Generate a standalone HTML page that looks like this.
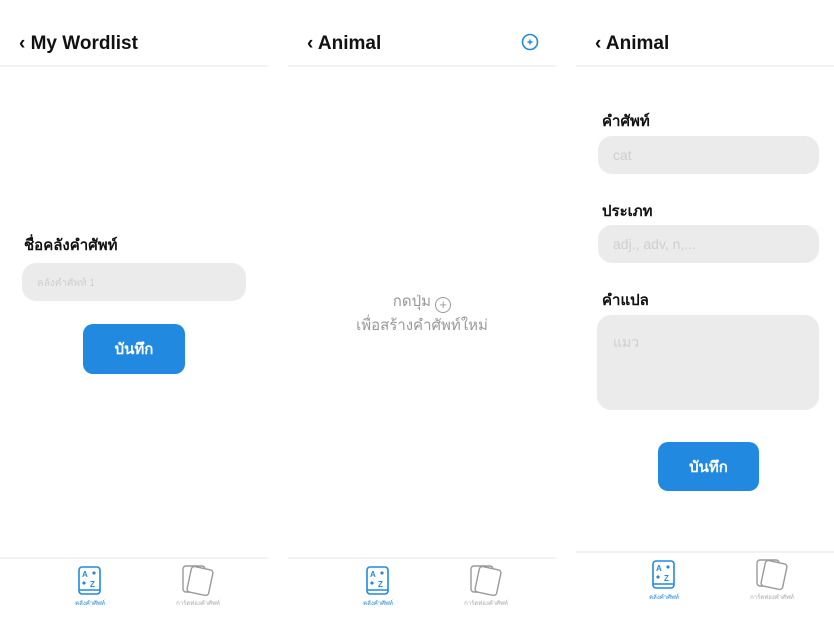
<!DOCTYPE html>
<html><head><meta charset="utf-8"><style>
body{margin:0;width:834px;height:624px;background:#fff;position:relative;overflow:hidden;font-family:"Liberation Sans","DejaVu Sans",sans-serif;color:#111}
.a{position:absolute}
.hdr{font-weight:bold;font-size:19px}
.line{height:2px;background:#f2f2f2}
.inp{background:#ebebeb;border-radius:14px}
.ph{color:#cfcfcf;font-size:14px}
.btn{background:#2189e0;border-radius:10px;color:#fff;font-weight:bold;font-size:15px;display:flex;align-items:center;justify-content:center}
.lab{font-weight:bold;font-size:15px}
.tab{font-size:6px;text-align:center}
</style></head><body>
<div class="a hdr" style="left:19px;top:33px">‹ My Wordlist</div>
<div class="a hdr" style="left:307px;top:33px">‹ Animal</div>
<div class="a hdr" style="left:595px;top:33px">‹ Animal</div>
<svg class="a" style="left:521px;top:33px" width="18" height="18" viewBox="0 0 18 18"><circle cx="9" cy="9" r="7.5" fill="none" stroke="#2189e0" stroke-width="1.6"/><path d="M9 6.5v5M6.5 9h5" stroke="#2189e0" stroke-width="1.4"/></svg>
<div class="a line" style="left:0;top:65px;width:268px"></div>
<div class="a line" style="left:288px;top:65px;width:268px"></div>
<div class="a line" style="left:576px;top:65px;width:258px"></div>
<div class="a lab" style="left:24px;top:233px">ชื่อคลังคำศัพท์</div>
<div class="a inp" style="left:22px;top:263px;width:224px;height:38px"></div>
<div class="a ph" style="left:37px;top:276px;font-size:10px">คลังคำศัพท์ 1</div>
<div class="a btn" style="left:83px;top:324px;width:102px;height:50px">บันทึก</div>
<div class="a" style="left:288px;top:290px;width:268px;text-align:center;color:#999;font-size:15px;line-height:24px">กดปุ่ม <span style="display:inline-block;width:14px;height:14px;border:1.6px solid #999;border-radius:50%;vertical-align:-3px;line-height:13px;font-size:13px">+</span><br>เพื่อสร้างคำศัพท์ใหม่</div>
<div class="a lab" style="left:602px;top:109px">คำศัพท์</div>
<div class="a inp" style="left:598px;top:136px;width:221px;height:38px"></div>
<div class="a ph" style="left:613px;top:147px">cat</div>
<div class="a lab" style="left:602px;top:199px">ประเภท</div>
<div class="a inp" style="left:598px;top:225px;width:221px;height:38px"></div>
<div class="a ph" style="left:613px;top:236px">adj., adv, n,...</div>
<div class="a lab" style="left:602px;top:288px">คำแปล</div>
<div class="a inp" style="left:597px;top:315px;width:222px;height:95px"></div>
<div class="a ph" style="left:613px;top:332px">แมว</div>
<div class="a btn" style="left:658px;top:442px;width:101px;height:49px">บันทึก</div>
<div class="a line" style="left:0;top:557px;width:268px"></div>
<div class="a line" style="left:288px;top:557px;width:268px"></div>
<div class="a line" style="left:576px;top:551px;width:258px"></div>
<svg class="a" style="left:78px;top:566px" width="23" height="30" viewBox="0 0 23 30"><rect x="1" y="1" width="21" height="27" rx="3" fill="none" stroke="#2189e0" stroke-width="1.6"/><path d="M1 24h21" stroke="#2189e0" stroke-width="1.4"/><text x="4" y="11" font-size="8" fill="#2189e0" font-family="Liberation Sans" font-weight="bold">A</text><text x="12" y="21" font-size="8" fill="#2189e0" font-family="Liberation Sans" font-weight="bold">Z</text><path d="M16 5l2 2-2 2-2-2zM6 15l2 2-2 2-2-2z" fill="#2189e0"/></svg>
<div class="a tab" style="left:60px;top:598px;width:60px;color:#2189e0">คลังคำศัพท์</div>
<svg class="a" style="left:181px;top:564px" width="34" height="32" viewBox="0 0 34 32"><rect x="2" y="2" width="22" height="26" rx="3" fill="#fff" stroke="#999" stroke-width="1.4"/><rect x="8" y="4" width="22" height="26" rx="3" fill="#fff" stroke="#999" stroke-width="1.4" transform="rotate(12 19 17)"/></svg>
<div class="a tab" style="left:166px;top:598px;width:64px;color:#aaa">การ์ดท่องคำศัพท์</div>
<svg class="a" style="left:366px;top:566px" width="23" height="30" viewBox="0 0 23 30"><rect x="1" y="1" width="21" height="27" rx="3" fill="none" stroke="#2189e0" stroke-width="1.6"/><path d="M1 24h21" stroke="#2189e0" stroke-width="1.4"/><text x="4" y="11" font-size="8" fill="#2189e0" font-family="Liberation Sans" font-weight="bold">A</text><text x="12" y="21" font-size="8" fill="#2189e0" font-family="Liberation Sans" font-weight="bold">Z</text><path d="M16 5l2 2-2 2-2-2zM6 15l2 2-2 2-2-2z" fill="#2189e0"/></svg>
<div class="a tab" style="left:348px;top:598px;width:60px;color:#2189e0">คลังคำศัพท์</div>
<svg class="a" style="left:469px;top:564px" width="34" height="32" viewBox="0 0 34 32"><rect x="2" y="2" width="22" height="26" rx="3" fill="#fff" stroke="#999" stroke-width="1.4"/><rect x="8" y="4" width="22" height="26" rx="3" fill="#fff" stroke="#999" stroke-width="1.4" transform="rotate(12 19 17)"/></svg>
<div class="a tab" style="left:454px;top:598px;width:64px;color:#aaa">การ์ดท่องคำศัพท์</div>
<svg class="a" style="left:652px;top:560px" width="23" height="30" viewBox="0 0 23 30"><rect x="1" y="1" width="21" height="27" rx="3" fill="none" stroke="#2189e0" stroke-width="1.6"/><path d="M1 24h21" stroke="#2189e0" stroke-width="1.4"/><text x="4" y="11" font-size="8" fill="#2189e0" font-family="Liberation Sans" font-weight="bold">A</text><text x="12" y="21" font-size="8" fill="#2189e0" font-family="Liberation Sans" font-weight="bold">Z</text><path d="M16 5l2 2-2 2-2-2zM6 15l2 2-2 2-2-2z" fill="#2189e0"/></svg>
<div class="a tab" style="left:634px;top:592px;width:60px;color:#2189e0">คลังคำศัพท์</div>
<svg class="a" style="left:755px;top:558px" width="34" height="32" viewBox="0 0 34 32"><rect x="2" y="2" width="22" height="26" rx="3" fill="#fff" stroke="#999" stroke-width="1.4"/><rect x="8" y="4" width="22" height="26" rx="3" fill="#fff" stroke="#999" stroke-width="1.4" transform="rotate(12 19 17)"/></svg>
<div class="a tab" style="left:740px;top:592px;width:64px;color:#aaa">การ์ดท่องคำศัพท์</div>
</body></html>
